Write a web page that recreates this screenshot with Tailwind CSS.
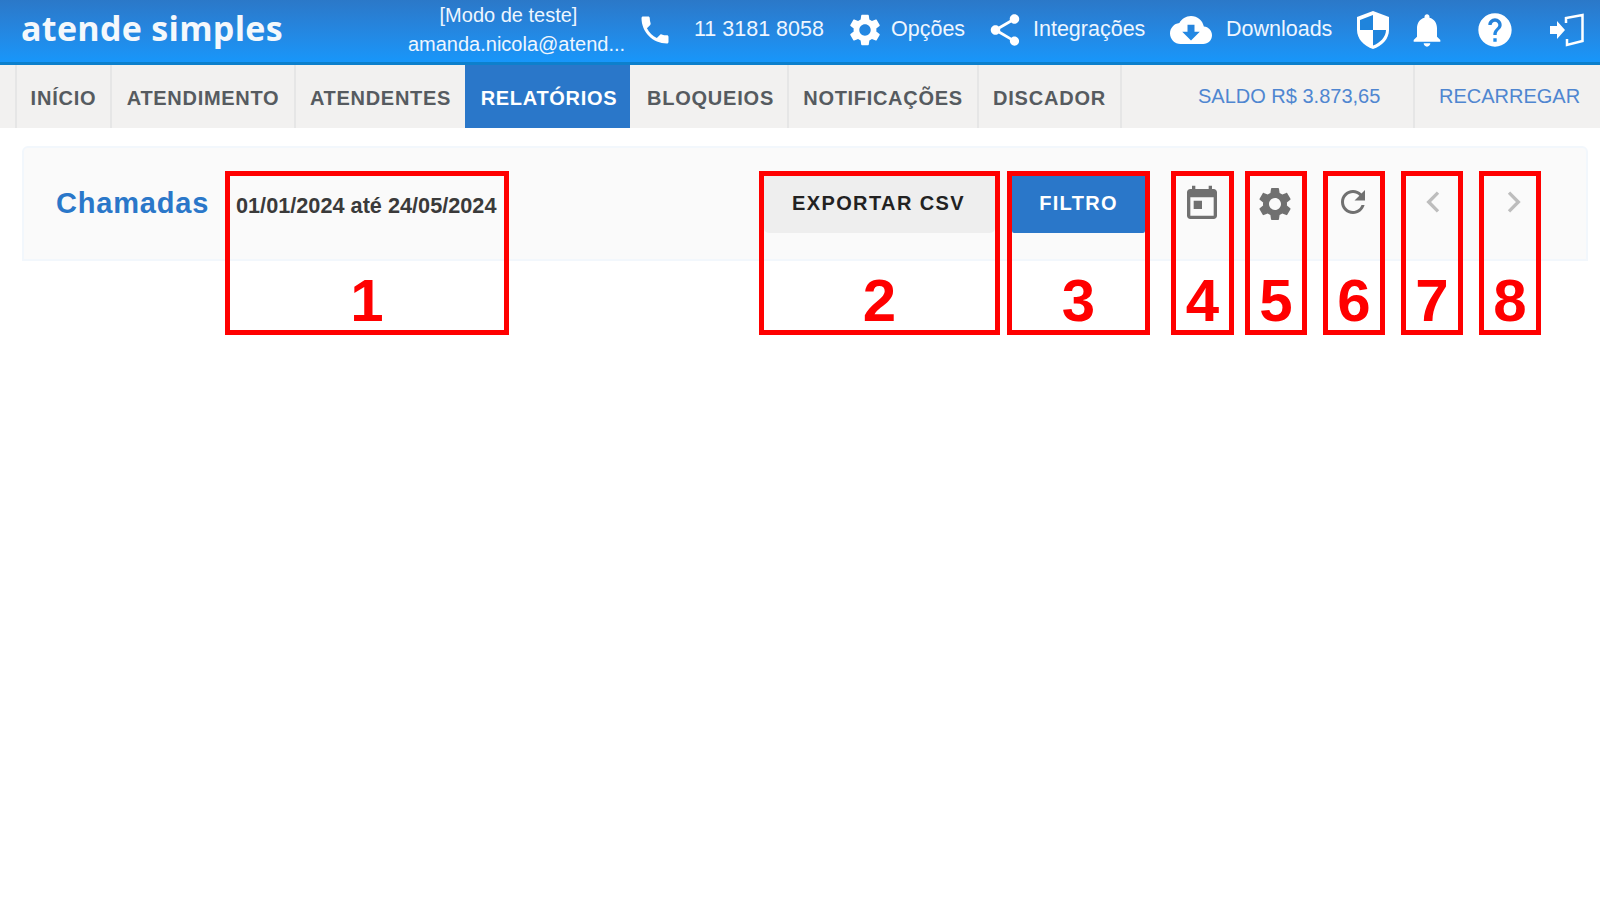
<!DOCTYPE html>
<html lang="pt-BR">
<head>
  <meta charset="UTF-8" />
  <title>Atende Simples - Chamadas</title>
  <script src="https://cdn.jsdelivr.net/npm/@tailwindcss/browser@4"></script>
</head>
<body class="relative w-[1600px] h-[900px] overflow-hidden bg-white font-['Liberation_Sans',sans-serif]">
  <!-- Header -->
  <header class="flex items-center h-[65px] pb-[3px] border-b-[3px] border-[#0d80cc] bg-gradient-to-b from-[#2b78c8] to-[#1796fa] text-[#eef6ff] text-[21.500px]">
    <span class="ml-[21px] mb-[3px] w-[260px] font-['Open_Sans',sans-serif] font-bold text-[34px] tracking-[0.3px] whitespace-nowrap text-[#f4f8fc]">atende simples</span>
    <div class="ml-[125px] w-[221px] flex flex-col items-center text-[20px] leading-[29px] whitespace-nowrap">
      <span class="pr-[16px]">[Modo de teste]</span>
      <span>amanda.nicola@atend...</span>
    </div>
    <svg class="ml-[10px] w-[36px] h-[36px] fill-white" viewBox="0 0 24 24"><path d="M6.620 10.790c1.440 2.830 3.760 5.140 6.590 6.590l2.200-2.200c.27-.27.67-.36 1.020-.24 1.120.37 2.330.57 3.570.57.55 0 1 .45 1 1V20c0 .55-.45 1-1 1-9.390 0-17-7.610-17-17 0-.55.45-1 1-1h3.500c.55 0 1 .45 1 1 0 1.250.2 2.450.57 3.570.11.35.03.74-.25 1.020l-2.200 2.200z"/></svg>
    <span class="ml-[21px] w-[128px] whitespace-nowrap">11 3181 8058</span>
    <svg class="ml-[24px] w-[38px] h-[38px] fill-white" viewBox="0 0 24 24"><path d="M19.14,12.94c0.04-0.3,0.06-0.61,0.06-0.94c0-0.32-0.02-0.64-0.07-0.94l2.03-1.58c0.18-0.14,0.23-0.41,0.12-0.61 l-1.92-3.32c-0.12-0.22-0.37-0.29-0.59-0.22l-2.39,0.96c-0.5-0.38-1.03-0.7-1.62-0.94L14.4,2.81c-0.04-0.24-0.24-0.41-0.48-0.41 h-3.84c-0.24,0-0.43,0.17-0.47,0.41L9.25,5.35C8.66,5.59,8.12,5.92,7.63,6.29L5.24,5.33c-0.22-0.08-0.47,0-0.59,0.22L2.74,8.87 C2.62,9.08,2.66,9.34,2.86,9.48l2.03,1.58C4.84,11.36,4.8,11.69,4.8,12s0.02,0.64,0.07,0.94l-2.03,1.58 c-0.18,0.14-0.23,0.41-0.12,0.61l1.92,3.32c0.12,0.22,0.37,0.29,0.59,0.22l2.39-0.96c0.5,0.38,1.03,0.7,1.62,0.94l0.36,2.54 c0.05,0.24,0.24,0.41,0.48,0.41h3.84c0.24,0,0.44-0.17,0.47-0.41l0.36-2.54c0.59-0.24,1.13-0.56,1.62-0.94l2.39,0.96 c0.22,0.08,0.47,0,0.59-0.22l1.92-3.32c0.12-0.22,0.07-0.47-0.12-0.61L19.14,12.94z M12,15.6c-1.98,0-3.6-1.62-3.6-3.6 s1.62-3.6,3.6-3.6s3.6,1.62,3.6,3.6S13.98,15.6,12,15.6z"/></svg>
    <span class="ml-[7px] w-[73px] whitespace-nowrap">Opções</span>
    <svg class="ml-[22px] w-[38px] h-[38px] fill-white" viewBox="0 0 24 24"><path d="M18 16.080c-.76 0-1.440.3-1.960.77L8.910 12.700c.05-.23.09-.46.09-.7s-.04-.47-.09-.7l7.050-4.110c.54.5 1.250.81 2.040.81 1.660 0 3-1.340 3-3s-1.340-3-3-3-3 1.340-3 3c0 .24.04.47.09.7L8.040 9.810C7.500 9.310 6.790 9 6 9c-1.660 0-3 1.340-3 3s1.340 3 3 3c.79 0 1.500-.31 2.040-.81l7.120 4.160c-.05.21-.08.43-.08.65 0 1.610 1.310 2.920 2.920 2.920s2.920-1.310 2.920-2.920-1.310-2.920-2.920-2.920z"/></svg>
    <span class="ml-[9px] w-[111px] whitespace-nowrap">Integrações</span>
    <svg class="ml-[26px] w-[42px] h-[42px] fill-white" viewBox="0 0 24 24"><path d="M19.350 10.040C18.670 6.590 15.640 4 12 4 9.110 4 6.600 5.640 5.350 8.040 2.340 8.360 0 10.910 0 14c0 3.310 2.690 6 6 6h13c2.760 0 5-2.240 5-5 0-2.640-2.050-4.780-4.650-4.960zM17 13l-5 5-5-5h3V9h4v4h3z"/></svg>
    <span class="ml-[14px] w-[105px] whitespace-nowrap">Downloads</span>
    <svg class="ml-[24px] w-[36px] h-[40px]" viewBox="0 0 36 40"><path d="M18 1 L34 7 V20 C34 29 27 36 18 39 C9 36 2 29 2 20 V7 Z" fill="#fff"/><path d="M18 5 L5 10 V20 H18 Z M18 20 V35.500 C25 33 31 27 31 20 Z" fill="#1f84dc"/></svg>
    <svg class="ml-[16px] w-[40px] h-[40px] fill-white" viewBox="0 0 24 24"><path d="M12 22c1.100 0 2-.9 2-2h-4c0 1.100.89 2 2 2zm6-6v-5c0-3.070-1.640-5.640-4.500-6.320V4c0-.83-.67-1.500-1.500-1.500s-1.500.67-1.500 1.500v.68C7.630 5.360 6 7.920 6 11v5l-2 2v1h16v-1l-2-2z"/></svg>
    <svg class="ml-[28px] w-[40px] h-[40px] fill-white" viewBox="0 0 24 24"><path d="M12 2C6.480 2 2 6.480 2 12s4.480 10 10 10 10-4.480 10-10S17.520 2 12 2zm1 17h-2v-2h2v2zm2.070-7.750l-.9.92C13.450 12.900 13 13.500 13 15h-2v-.5c0-1.100.45-2.100 1.170-2.830l1.240-1.260c.37-.36.59-.86.59-1.410 0-1.100-.9-2-2-2s-2 .9-2 2H8c0-2.210 1.790-4 4-4s4 1.790 4 4c0 .88-.36 1.680-.93 2.250z"/></svg>
    <svg class="ml-[33px] w-[36px] h-[36px]" viewBox="0 0 36 36"><path d="M2 14 H9 V9 L17 18 L9 27 V22 H2 Z" fill="#fff"/><path d="M18 11 V6 L34.500 3 V29 L19 33 V27" fill="none" stroke="#fff" stroke-width="2.500"/></svg>
  </header>

  <!-- Tabs -->
  <nav class="flex h-[63px] pl-[15px] bg-[#f2f1f0] text-[20px] font-bold tracking-[0.8px] text-[#565b60]">
    <a class="w-[95px] pt-[2px] flex items-center justify-center border-l-2 border-[#e6e6e6]">INÍCIO</a>
    <a class="w-[184px] pt-[2px] flex items-center justify-center border-l-2 border-[#e6e6e6] tracking-[0.7px]">ATENDIMENTO</a>
    <a class="w-[171px] pt-[2px] flex items-center justify-center border-l-2 border-[#e6e6e6] tracking-[0.7px]">ATENDENTES</a>
    <a class="w-[165px] pt-[2px] pl-[3px] flex items-center justify-center bg-[#2a77c9] text-white tracking-[0.7px]">RELATÓRIOS</a>
    <a class="w-[157px] pt-[2px] pl-[4px] flex items-center justify-center tracking-[0.8px]">BLOQUEIOS</a>
    <a class="w-[190px] pt-[2px] flex items-center justify-center border-l-2 border-[#e6e6e6] tracking-[0.7px]">NOTIFICAÇÕES</a>
    <a class="w-[143px] pt-[2px] flex items-center justify-center border-l-2 border-[#e6e6e6]">DISCADOR</a>
    <div class="w-[293px] pb-[2px] flex items-center pl-[76px] border-l-2 border-[#e6e6e6] font-normal tracking-normal text-[#4f86d0]">SALDO R$ 3.873,65</div>
    <div class="flex-1 pb-[2px] flex items-center pl-[24px] border-l-2 border-[#e6e6e6] font-normal tracking-normal text-[#4f86d0]">RECARREGAR</div>
  </nav>

  <!-- Card -->
  <section class="mt-[18px] mx-[22px] w-[1566px] h-[115px] rounded-t-[6px] border-x-2 border-t-2 border-b-2 border-[#f2f7fc] bg-[#fafafa] flex items-start">
    <h1 class="ml-[32px] mt-[39px] w-[152px] text-[29px] leading-[32px] font-bold tracking-[0.8px] text-[#2a77c9] whitespace-nowrap">Chamadas</h1>
    <span class="ml-[28px] mt-[44px] w-[262px] text-[21.700px] leading-[28px] font-bold text-[#3a3a3a] whitespace-nowrap">01/01/2024 até 24/05/2024</span>
    <button class="ml-[266px] mt-[27px] w-[231px] h-[58px] rounded-b-[5px] bg-[#eeeeee] pr-[2px] pb-[2px] text-[20px] font-bold tracking-[1.400px] text-[#222]">EXPORTAR CSV</button>
    <button class="ml-[17px] mt-[27px] w-[133px] h-[58px] rounded-b-[2px] bg-[#2a77c9] pb-[2px] text-[20px] font-bold tracking-[1.300px] text-white">FILTRO</button>
    <svg class="ml-[37px] mt-[36px] w-[40px] h-[40px] fill-[#707070]" viewBox="0 0 24 24"><path d="M16 1v2H8V1H6v2H5c-1.110 0-1.990.9-1.990 2L3 19c0 1.100.89 2 2 2h14c1.100 0 2-.9 2-2V5c0-1.100-.9-2-2-2h-1V1h-2zm3 18H5V8h14v11zM7 10h5v5H7z"/></svg>
    <svg class="ml-[33px] mt-[36px] w-[40px] h-[40px] fill-[#707070]" viewBox="0 0 24 24"><path d="M19.14,12.94c0.04-0.3,0.06-0.61,0.06-0.94c0-0.32-0.02-0.64-0.07-0.94l2.03-1.58c0.18-0.14,0.23-0.41,0.12-0.61 l-1.92-3.32c-0.12-0.22-0.37-0.29-0.59-0.22l-2.39,0.96c-0.5-0.38-1.03-0.7-1.62-0.94L14.4,2.81c-0.04-0.24-0.24-0.41-0.48-0.41 h-3.84c-0.24,0-0.43,0.17-0.47,0.41L9.25,5.35C8.66,5.59,8.12,5.92,7.63,6.29L5.24,5.33c-0.22-0.08-0.47,0-0.59,0.22L2.74,8.87 C2.62,9.08,2.66,9.34,2.86,9.48l2.03,1.58C4.84,11.36,4.8,11.69,4.8,12s0.02,0.64,0.07,0.94l-2.03,1.58 c-0.18,0.14-0.23,0.41-0.12,0.61l1.92,3.32c0.12,0.22,0.37,0.29,0.59,0.22l2.39-0.96c0.5,0.38,1.03,0.7,1.62,0.94l0.36,2.54 c0.05,0.24,0.24,0.41,0.48,0.41h3.84c0.24,0,0.44-0.17,0.47-0.41l0.36-2.54c0.59-0.24,1.13-0.56,1.62-0.94l2.39,0.96 c0.22,0.08,0.47,0,0.59-0.22l1.92-3.32c0.12-0.22,0.07-0.47-0.12-0.61L19.14,12.94z M12,15.6c-1.98,0-3.6-1.62-3.6-3.6 s1.62-3.6,3.6-3.6s3.6,1.62,3.6,3.6S13.98,15.6,12,15.6z"/></svg>
    <svg class="ml-[40px] mt-[36px] w-[36px] h-[36px] fill-[#707070]" viewBox="0 0 24 24"><path d="M17.650 6.350C16.200 4.900 14.210 4 12 4c-4.420 0-7.990 3.580-7.990 8s3.570 8 7.990 8c3.730 0 6.840-2.550 7.730-6h-2.080c-.82 2.330-3.040 4-5.650 4-3.310 0-6-2.690-6-6s2.690-6 6-6c1.660 0 3.140.69 4.220 1.780L13 11h7V4l-2.350 2.350z"/></svg>
    <svg class="ml-[47px] mt-[38px] w-[32px] h-[32px] fill-none stroke-[#bdbdbd] stroke-[2.500px]" viewBox="0 0 24 24"><path d="M15 5l-7 7 7 7"/></svg>
    <svg class="ml-[47px] mt-[38px] w-[32px] h-[32px] fill-none stroke-[#bdbdbd] stroke-[2.500px]" viewBox="0 0 24 24"><path d="M9 5l7 7-7 7"/></svg>
  </section>

  <!-- Numbered annotation frames over the toolbar -->
  <div class="absolute left-[225px] top-[171px] w-[284px] h-[164px] border-[5px] border-[#ff0000] flex items-end justify-center font-bold text-[60px] leading-[58px] text-[#ff0000]">1</div>
  <div class="absolute left-[759px] top-[171px] w-[241px] h-[164px] border-[5px] border-[#ff0000] flex items-end justify-center font-bold text-[60px] leading-[58px] text-[#ff0000]">2</div>
  <div class="absolute left-[1007px] top-[171px] w-[143px] h-[164px] border-[5px] border-[#ff0000] flex items-end justify-center font-bold text-[60px] leading-[58px] text-[#ff0000]">3</div>
  <div class="absolute left-[1171px] top-[171px] w-[63px] h-[164px] border-[5px] border-[#ff0000] flex items-end justify-center font-bold text-[60px] leading-[58px] text-[#ff0000]">4</div>
  <div class="absolute left-[1245px] top-[171px] w-[62px] h-[164px] border-[5px] border-[#ff0000] flex items-end justify-center font-bold text-[60px] leading-[58px] text-[#ff0000]">5</div>
  <div class="absolute left-[1323px] top-[171px] w-[62px] h-[164px] border-[5px] border-[#ff0000] flex items-end justify-center font-bold text-[60px] leading-[58px] text-[#ff0000]">6</div>
  <div class="absolute left-[1401px] top-[171px] w-[62px] h-[164px] border-[5px] border-[#ff0000] flex items-end justify-center font-bold text-[60px] leading-[58px] text-[#ff0000]">7</div>
  <div class="absolute left-[1479px] top-[171px] w-[62px] h-[164px] border-[5px] border-[#ff0000] flex items-end justify-center font-bold text-[60px] leading-[58px] text-[#ff0000]">8</div>
</body>
</html>
